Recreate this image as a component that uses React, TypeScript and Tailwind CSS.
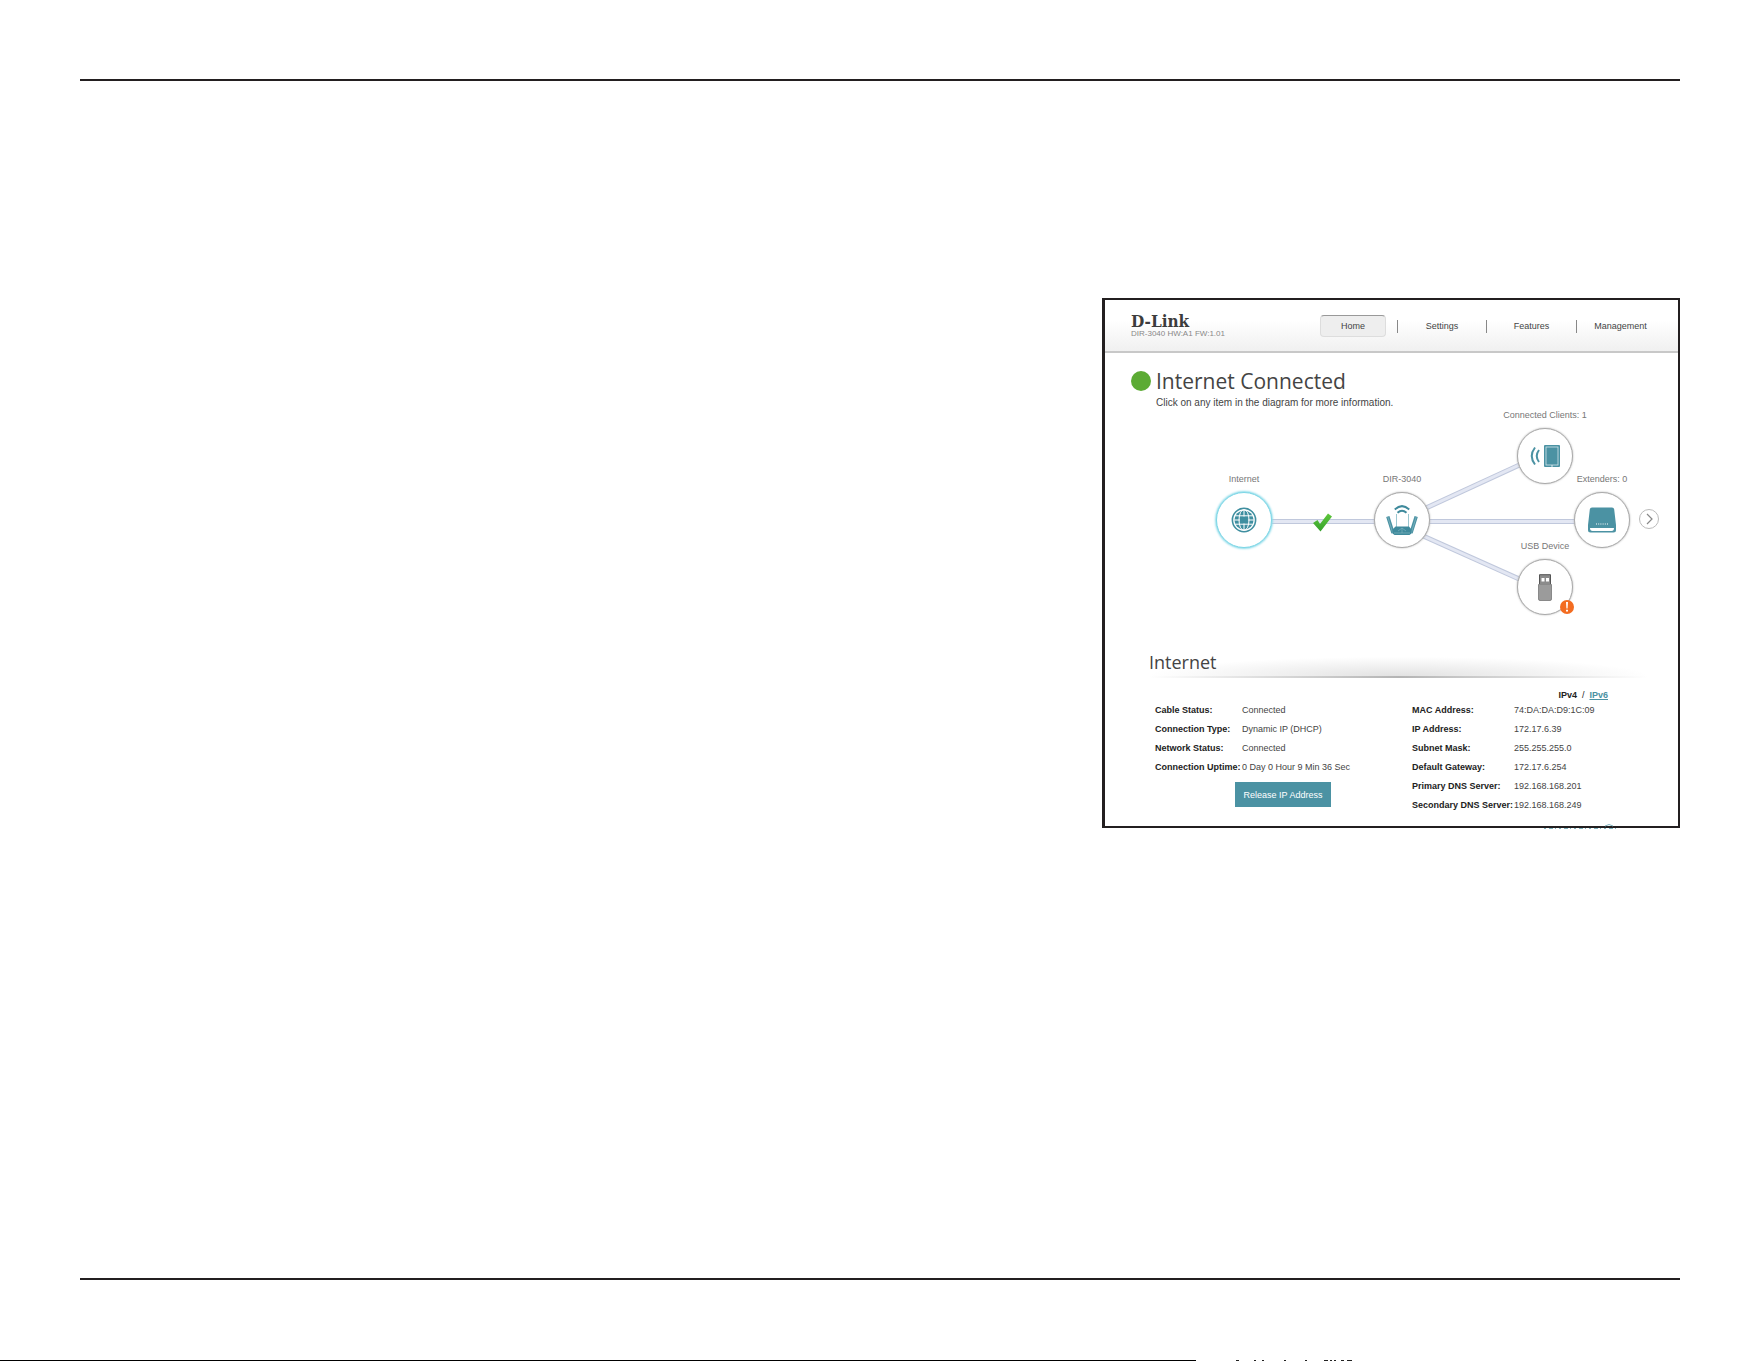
import React from "react";

type NodeProps = {
  label: string;
  place: string;
  active?: boolean;
  children: React.ReactNode;
};

function DiagramNode({ label, place, active, children }: NodeProps) {
  return (
    <button
      type="button"
      className={"absolute flex w-24 -translate-x-1/2 flex-col items-center gap-2 text-[9px] leading-[10px] text-[#777] " + place}
    >
      <span className="whitespace-nowrap">{label}</span>
      <span
        className={
          "relative flex size-14 items-center justify-center rounded-full bg-white " +
          (active
            ? "border border-[#7cd6e6] shadow-[0_0_2px_1px_#8edcea]"
            : "border border-[#aaa] shadow-[0_0_2px_#aaa]")
        }
      >
        {children}
      </span>
    </button>
  );
}

function GlobeIcon() {
  return (
    <svg viewBox="0 0 26 26" className="size-[26px]" fill="none">
      <circle cx="13" cy="13" r="11.6" stroke="#3f8fa0" strokeWidth="1.6" />
      <circle cx="13" cy="13" r="9.6" fill="#3f8fa0" />
      <g stroke="#fff" strokeWidth="1">
        <path d="M13 3v6.500M13 16.500v6.500M3 13h6M17 13h6M4 8.800h18M4 17.200h18" />
        <ellipse cx="13" cy="13" rx="5" ry="10.500" />
      </g>
    </svg>
  );
}

function RouterIcon() {
  return (
    <svg viewBox="0 0 34 32" className="h-8 w-[34px]" fill="none">
      <path d="M9.800 5.500Q17-1.200 24.200 5.500M12.500 8.700Q17 4.800 21.500 8.700" stroke="#3f8a9c" strokeWidth="2" />
      <path d="M11.500 10v13M23.500 10v13" stroke="#9cc7d0" strokeWidth="1" />
      <path d="M2.800 12.500L8 29M31.200 12.500L26 29" stroke="#4b92a3" strokeWidth="3.400" />
      <path d="M2.800 13l5 16M31.200 13l-5 16" stroke="#8fbfca" strokeWidth=".6" />
      <path d="M10.500 22.500h13.500l2.500 3v4l-2 1.500h-15l-2-1.500v-4z" fill="#3f8a9c" />
      <path d="M13 27l4-3 4 3M17 24v5M9 29h16" stroke="#86b8c4" strokeWidth=".6" />
    </svg>
  );
}

function ClientIcon() {
  return (
    <svg viewBox="0 0 30 24" className="h-6 w-[30px]" fill="none">
      <path d="M5 3.500Q-1.500 12 5 20.500M9 6Q4.500 12 9 18" stroke="#4b92a3" strokeWidth="2" />
      <rect x="14" y="1" width="16" height="22" rx="1" fill="#4b92a3" />
      <rect x="16" y="3" width="12" height="18" stroke="#d3e6ea" strokeWidth=".8" />
      <path d="M21 22h2" stroke="#fff" strokeWidth=".8" />
    </svg>
  );
}

function ExtenderIcon() {
  return (
    <svg viewBox="0 0 28 26" className="h-[26px] w-7">
      <path d="M4 .5h20q2 0 2.200 2L28 18v5q0 2.500-2.500 2.500h-23Q0 25.500 0 23v-5L1.800 2.500Q2 .5 4 .5z" fill="#4b92a3" />
      <path d="M2 21h24q0 3-2.500 3h-19Q2 24 2 21z" fill="#fff" />
      <path d="M8 17h12" stroke="#fff" strokeWidth="1" strokeDasharray="1 1.200" />
    </svg>
  );
}

function UsbIcon() {
  return (
    <svg viewBox="0 0 14 27" className="h-[27px] w-3.5">
      <path d="M1.500 10V.7h11V10" fill="#8b8b8b" stroke="#555" strokeWidth="1" />
      <path d="M3.500 4h3v3.500h-3zM8 4h3v3.500H8z" fill="#fff" />
      <path d="M.5 10.500h13V25q0 1.500-1.500 1.500H2Q.5 26.500 .5 25z" fill="#9b9b9b" stroke="#777" strokeWidth=".8" />
    </svg>
  );
}

const links = [
  "M138 111.500H296",
  "M296 111.500H497",
  "M308 104L423 51",
  "M307 121L423 173",
];

const leftRows = [
  ["Cable Status:", "Connected"],
  ["Connection Type:", "Dynamic IP (DHCP)"],
  ["Network Status:", "Connected"],
  ["Connection Uptime:", "0 Day 0 Hour 9 Min 36 Sec"],
];

const rightRows = [
  ["MAC Address:", "74:DA:DA:D9:1C:09"],
  ["IP Address:", "172.17.6.39"],
  ["Subnet Mask:", "255.255.255.0"],
  ["Default Gateway:", "172.17.6.254"],
  ["Primary DNS Server:", "192.168.168.201"],
  ["Secondary DNS Server:", "192.168.168.249"],
];

function InfoTable({ rows, labelWidth }: { rows: string[][]; labelWidth: string }) {
  return (
    <table className="text-left">
      <tbody>
        {rows.map(([label, value]) => (
          <tr key={label} className="h-[19px] whitespace-nowrap">
            <th scope="row" className={"p-0 font-bold text-[#222] " + labelWidth}>{label}</th>
            <td className="p-0 text-[#444]">{value}</td>
          </tr>
        ))}
      </tbody>
    </table>
  );
}

function NetworkDiagram() {
  return (
    <div className="relative h-[234px]">
      <svg viewBox="0 0 573 234" className="absolute top-0 left-0 h-[234px] w-[573px]" fill="none">
        {links.map((d) => (
          <g key={d}>
            <path d={d} stroke="#c0c8dc" strokeWidth="5" />
            <path d={d} stroke="#e3e7f3" strokeWidth="3" />
          </g>
        ))}
        <defs>
          <linearGradient id="tick" x1="0" y1="0" x2="0" y2="1">
            <stop stopColor="#5fc73c" />
            <stop offset="1" stopColor="#35a12c" />
          </linearGradient>
        </defs>
        <path d="M208 113l4.500-3 2.500 4L223 103.500l4 3L215.500 121.500z" fill="url(#tick)" />
      </svg>
      <DiagramNode label="Internet" place="left-[139px] top-16" active><GlobeIcon /></DiagramNode>
      <DiagramNode label="DIR-3040" place="left-[297px] top-16"><RouterIcon /></DiagramNode>
      <DiagramNode label="Connected Clients: 1" place="left-[440px] top-0"><ClientIcon /></DiagramNode>
      <DiagramNode label="Extenders: 0" place="left-[497px] top-16"><ExtenderIcon /></DiagramNode>
      <DiagramNode label="USB Device" place="left-[440px] top-[131px]">
        <UsbIcon />
        <span className="absolute -right-0.5 bottom-0 flex size-3.5 items-center justify-center rounded-full bg-[#f36c21]">
          <svg viewBox="0 0 14 14" className="size-3.5" fill="#fff">
            <path d="M6 2h2l-.4 6.500H6.400zM6 9.800h2v1.800H6z" />
          </svg>
        </span>
      </DiagramNode>
      <button type="button" aria-label="Next" className="absolute top-[99px] left-[534px] flex size-5 items-center justify-center rounded-full border border-[#bbb] bg-white">
        <svg viewBox="0 0 12 12" className="size-3" fill="none" stroke="#888" strokeWidth="1.200">
          <path d="M4 1l5 5-5 5" />
        </svg>
      </button>
    </div>
  );
}

function RouterScreen() {
  return (
    <section className="relative w-full max-w-[578px] border-2 border-l-3 border-[#231f20] bg-white text-[9px] leading-[10px] text-[#444]">
      <header className="flex h-[53px] items-start justify-between border-b-2 border-[#c8c8c8] bg-linear-to-b from-white from-40% to-[#f0f0f0] pr-3.5 pl-[26px]">
        <div className="flex flex-col pt-3.5">
          <span className="font-['DejaVu_Serif_Condensed','DejaVu_Serif',serif] text-[17px] leading-[15px] font-black text-[#3c3c3c]">
            D-Link
          </span>
          <span className="text-[8px] text-[#888]">DIR-3040 HW:A1 FW:1.01</span>
        </div>
        <nav className="flex items-center pt-[15px]">
          <a href="#home" className="flex h-[22px] w-[66px] items-center justify-center rounded-sm border border-[#ddd] border-t-[#999] bg-[#eee]">Home</a>
          <span className="ml-[11px] h-[13px] w-px bg-[#888]" />
          <a href="#settings" className="w-[88px] text-center">Settings</a>
          <span className="h-[13px] w-px bg-[#888]" />
          <a href="#features" className="w-[89px] text-center">Features</a>
          <span className="h-[13px] w-px bg-[#888]" />
          <a href="#management" className="w-[87px] text-center">Management</a>
        </nav>
      </header>

      <div className="flex items-start gap-[5px] pt-[17px] pl-[26px]">
        <span className="mt-px size-5 rounded-full bg-[#5cab34]" />
        <div>
          <h1 className="font-['Open_Sans','Noto_Sans',sans-serif] text-[21px] leading-[22px] text-[#444]">Internet Connected</h1>
          <p className="mt-[6px] text-[10px]">Click on any item in the diagram for more information.</p>
        </div>
      </div>

      <div className="mt-0.5">
        <NetworkDiagram />
      </div>

      <div className="pt-2 pr-[30px] pl-11">
        <div className="flex h-6 items-start bg-[radial-gradient(ellipse_50%_80%_at_50%_100%,#e2e2e2,transparent)]">
          <h2 className="font-['Open_Sans','Noto_Sans',sans-serif] text-[18px] leading-5 text-[#444]">Internet</h2>
        </div>
        <div className="h-0.5 bg-linear-to-r from-transparent via-[#b4b4b4] to-transparent" />
      </div>

      <div className="flex h-[148px] justify-between pt-3 pr-[70px] pl-[50px]">
        <div className="flex flex-col pt-2.5">
          <InfoTable rows={leftRows} labelWidth="w-[87px]" />
          <button type="button" className="mt-1.5 ml-20 h-[25px] w-24 bg-[#4b92a3] text-center text-white">Release IP Address</button>
        </div>
        <div className="w-[196px]">
          <p className="text-right text-[#222]"><b>IPv4</b> &nbsp;/&nbsp; <a href="#ipv6" className="font-bold text-[#4b92a3] underline">IPv6</a></p>
          <InfoTable rows={rightRows} labelWidth="w-[102px]" />
        </div>
      </div>
      <svg viewBox="0 0 74 5" className="absolute right-[60px] -bottom-[3px] h-[5px] w-[74px]" fill="none" stroke="#7fb3bf">
        <path d="M0 4.500h74" strokeDasharray="2 3 4 2 1 3" />
        <path d="M61 2q4-3 8 0" />
      </svg>
    </section>
  );
}

export default function App() {
  return (
    <div className="flex min-h-screen flex-col bg-white font-['Liberation_Sans',Arial,sans-serif]">
      <main className="mt-[79px] mr-[81px] mb-20 ml-20 flex grow flex-col items-end border-y-2 border-[#231f20] pt-[217px]">
        <RouterScreen />
      </main>
      <footer className="flex h-px items-stretch">
        <div className="w-[67.9%] bg-black" />
        <svg viewBox="0 0 116 1" className="ml-10 h-px w-[116px]" fill="#222">
          <path d="M0 0h3v1H0zM18 0h2v1h-2zM26 0h2v1h-2zM48 0h2v1h-2zM69 0h2v1h-2zM88 0h4v1h-4zM94 0h2v1h-2zM98 0h2v1h-2zM105 0h3v1h-3zM111 0h5v1h-5z" />
        </svg>
      </footer>
    </div>
  );
}
